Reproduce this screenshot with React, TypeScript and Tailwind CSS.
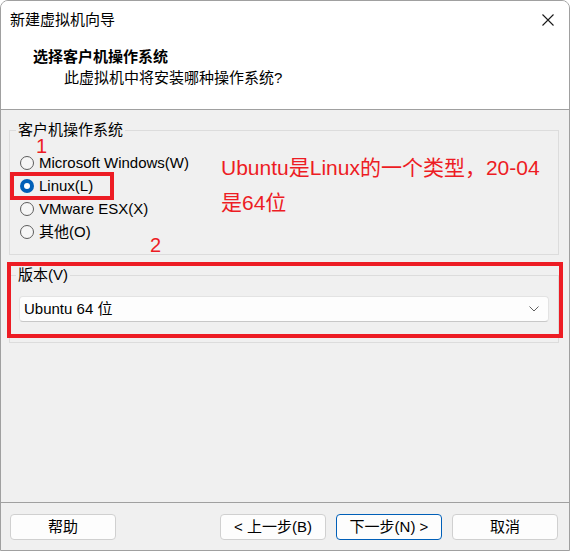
import React from 'react';

const options = [
  { label: 'Microsoft Windows(W)', checked: false },
  { label: 'Linux(L)', checked: true },
  { label: 'VMware ESX(X)', checked: false },
  { label: '其他(O)', checked: false },
];

function Radio({ label, checked }: { label: string; checked: boolean }) {
  return (
    <div className="flex h-[23px] items-center">
      {checked ? (
        <span className="ml-[10px] flex h-[14px] w-[14px] items-center justify-center rounded-full bg-[#005fb8]">
          <span className="h-[6px] w-[6px] rounded-full bg-white" />
        </span>
      ) : (
        <span className="ml-[10px] h-[14px] w-[14px] rounded-full border border-[#5d5d5d] bg-[#f6f6f6]" />
      )}
      <span className="ml-[5px] text-[15px] leading-[20px] text-black">{label}</span>
    </div>
  );
}

function Button({ children, primary }: { children: React.ReactNode; primary?: boolean }) {
  return (
    <button
      className={
        primary
          ? 'h-[26px] w-[106px] rounded-[4px] border border-[#005fb8] bg-[#fdfdfd] text-[15px] leading-[20px] text-black'
          : 'h-[26px] w-[106px] rounded-[4px] border border-[#d0d0d0] bg-[#fdfdfd] text-[15px] leading-[20px] text-black'
      }
    >
      {children}
    </button>
  );
}

export default function App() {
  return (
    <div className="relative flex h-[551px] w-[570px] flex-col overflow-hidden rounded-t-[8px] border border-[#a0a0a0] bg-[#f0f0f0] font-['Liberation_Sans','Noto_Sans_CJK_SC',sans-serif] text-black">
      {/* header */}
      <div className="border-b border-[#a0a0a0] bg-white">
        <div className="flex h-[37px] items-center justify-between pl-[9px] pr-[15px]">
          <span className="text-[15px] leading-[20px]">新建虚拟机向导</span>
          <svg width="12" height="12" viewBox="0 0 12 12">
            <path d="M0.5 0.5 L11.5 11.5 M11.5 0.5 L0.5 11.5" stroke="#1a1a1a" strokeWidth="1.1" fill="none" />
          </svg>
        </div>
        <div className="mt-[9px] pl-[32px] text-[15px] font-bold leading-[20px]">选择客户机操作系统</div>
        <div className="mt-[1px] pb-[21px] pl-[63px] text-[15px] leading-[20px]">此虚拟机中将安装哪种操作系统?</div>
      </div>

      {/* body */}
      <div className="flex-1">
        <fieldset className="ml-[8px] mr-[10px] mt-[10px] border border-[#dcdcdc] pb-[11px]">
          <legend className="ml-[6px] px-[2px] text-[15px] leading-[20px]">客户机操作系统</legend>
          <div className="pt-[11px]">
            {options.map((o) => (
              <Radio key={o.label} label={o.label} checked={o.checked} />
            ))}
          </div>
        </fieldset>

        <fieldset className="ml-[8px] mr-[10px] mt-[10px] border border-[#dcdcdc] pb-[20px]">
          <legend className="ml-[6px] px-[2px] text-[15px] leading-[20px]">版本(V)</legend>
          <div className="pl-[9px] pr-[9px] pt-[11px]">
            <div className="flex h-[26px] items-center justify-between rounded-[4px] border border-[#e3e3e3] border-b-[#c8c8c8] bg-[#fdfdfd] pl-[4px] pr-[9px]">
              <span className="text-[15px] leading-[20px]">Ubuntu 64 位</span>
              <svg width="10" height="6" viewBox="0 0 10 6">
                <path d="M0.5 0.5 L5 5 L9.5 0.5" stroke="#606060" strokeWidth="1" fill="none" />
              </svg>
            </div>
          </div>
        </fieldset>
      </div>

      {/* footer */}
      <div className="flex h-[48px] items-start justify-between border-t border-[#a0a0a0] pl-[9px] pr-[11px] pt-[11px]">
        <Button>帮助</Button>
        <div className="flex gap-[10px]">
          <Button>&lt; 上一步(B)</Button>
          <Button primary>下一步(N) &gt;</Button>
          <Button>取消</Button>
        </div>
      </div>

      {/* red annotations drawn over the dialog */}
      <div className="absolute left-[35px] top-[137px] text-[20px] leading-[16px] text-[#ed1c24]">1</div>
      <div className="absolute left-[9px] top-[171px] h-[28px] w-[104px] border-[4px] border-[#ed1c24]" />
      <div className="absolute left-[220px] top-[149px] text-[21px] leading-[35px] text-[#ed1c24]">
        Ubuntu是Linux的一个类型，20-04
        <br />
        是64位
      </div>
      <div className="absolute left-[149px] top-[236px] text-[20px] leading-[16px] text-[#ed1c24]">2</div>
      <div className="absolute left-[6px] top-[261px] h-[76px] w-[556px] border-[4px] border-[#ed1c24]" />
    </div>
  );
}
